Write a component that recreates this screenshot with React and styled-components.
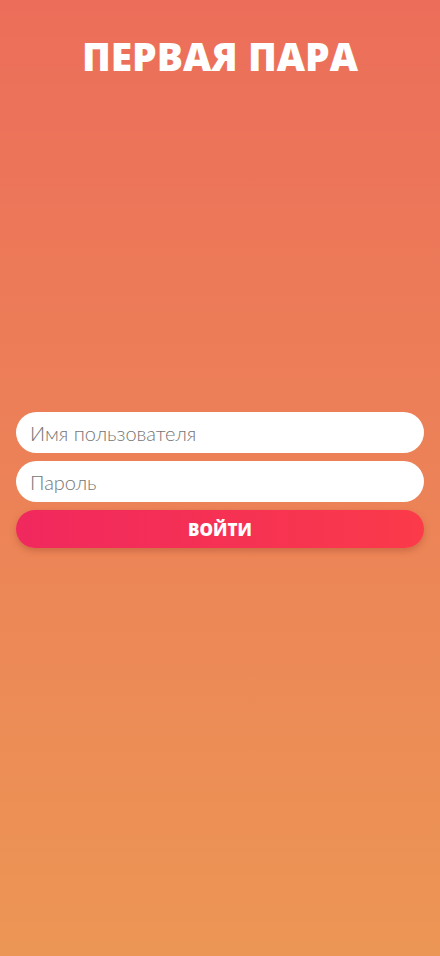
import React from "react";
import styled, { createGlobalStyle } from "styled-components";

const Global = createGlobalStyle`
  html, body { margin: 0; padding: 0; }
  body { font-family: "Noto Sans", "Open Sans", sans-serif; }
  * { box-sizing: border-box; }
`;

const Page = styled.div`
  min-height: 100vh;
  display: grid;
  grid-template-rows: 1fr auto 1fr;
  background: linear-gradient(180deg, #ec6e5a 0%, #ec9655 100%);
  padding: 0 16px;
`;

const Header = styled.header`
  display: flex;
  justify-content: center;
  padding-top: 30px;
  align-self: start;
`;

const Title = styled.h1`
  margin: 0;
  color: #fff;
  font-family: "Open Sans", sans-serif;
  font-weight: 800;
  font-size: 39px;
  letter-spacing: 0;
  line-height: 52px;
`;

const Form = styled.form`
  display: flex;
  flex-direction: column;
  gap: 8px;
  padding-top: 4px;
`;

const Input = styled.input`
  height: 41px;
  border: none;
  outline: none;
  border-radius: 21px;
  background: #fff;
  padding: 0 14px;
  font-family: "Lato", sans-serif;
  font-weight: 300;
  font-size: 20px;
  color: #333;
  &::placeholder { color: #757575; }
`;

const Button = styled.button`
  height: 38px;
  border: none;
  border-radius: 19px;
  background: linear-gradient(90deg, #f0285e 0%, #fb3a4a 100%);
  box-shadow: 0 3px 6px rgba(150, 60, 40, 0.35);
  color: #fff;
  font-family: "Open Sans", sans-serif;
  font-weight: 800;
  font-size: 17px;
  letter-spacing: 0;
  cursor: pointer;
`;

export default function App() {
  return (
    <>
      <Global />
      <Page>
        <Header>
          <Title>ПЕРВАЯ ПАРА</Title>
        </Header>
        <Form onSubmit={(e) => e.preventDefault()}>
          <Input placeholder="Имя пользователя" />
          <Input type="password" placeholder="Пароль" />
          <Button type="submit">ВОЙТИ</Button>
        </Form>
        <div />
      </Page>
    </>
  );
}
